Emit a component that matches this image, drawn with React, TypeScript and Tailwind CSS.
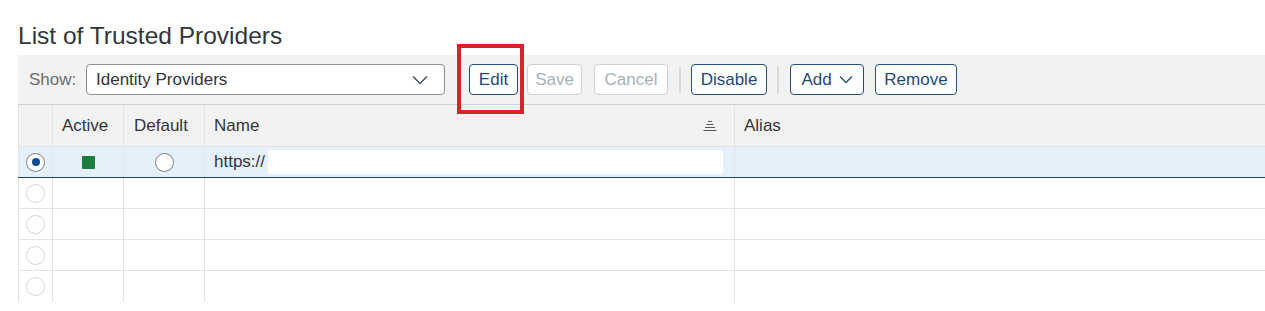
import React from "react";

const cols = ["w-[35px]", "w-[71px]", "w-[81px]", "w-[530px]", "flex-1"];

function Radio({ checked, faint }: { checked?: boolean; faint?: boolean }) {
  return (
    <span
      className={`flex h-[19px] w-[19px] items-center justify-center rounded-full border bg-white ${
        faint ? "border-[#d6d6d6]" : "border-[#7b8087]"
      }`}
    >
      {checked && <span className="h-[8px] w-[8px] rounded-full bg-[#0a4f9a]" />}
    </span>
  );
}

function Btn({ label, disabled, chevron, className = "" }: { label: string; disabled?: boolean; chevron?: boolean; className?: string }) {
  return (
    <button
      className={`flex h-[31px] shrink-0 items-center justify-center gap-[7px] rounded-[4px] border bg-white text-[17px] ${
        disabled ? "border-[#c9d1d9] text-[#a7b1bb]" : "border-[#224f7f] text-[#1f4a78]"
      } ${className}`}
    >
      {label}
      {chevron && (
        <svg width="14" height="9" viewBox="0 0 14 9" fill="none">
          <path d="M1 1.5 L7 7.5 L13 1.5" stroke="#1f4a78" strokeWidth="1.3" />
        </svg>
      )}
    </button>
  );
}

function Sep({ className = "" }: { className?: string }) {
  return <div className={`h-[28px] w-[2px] shrink-0 bg-[#d9d9d9] ${className}`} />;
}

export default function App() {
  return (
    <div className="relative h-[311px] w-[1265px] overflow-hidden bg-white font-['Liberation_Sans',Arial,sans-serif] text-[#32363a]">
      <div className="pl-[18px] pt-[21px] text-[24.5px] leading-[30px]">List of Trusted Providers</div>

      <div className="ml-[18px] mt-[4px] flex h-[50px] items-center border-b border-[#cfcfcf] bg-[#f2f2f2] pl-[11px]">
        <span className="w-[57px] shrink-0 text-[17px] text-[#6a6d70]">Show:</span>
        <div className="flex h-[31px] w-[359px] shrink-0 items-center justify-between rounded-[4px] border border-[#8a9097] bg-white pl-[9px] pr-[16px] text-[17px]">
          <span>Identity Providers</span>
          <svg width="16" height="10" viewBox="0 0 16 10" fill="none">
            <path d="M1 1.5 L8 8.5 L15 1.5" stroke="#3a4a5c" strokeWidth="1.3" />
          </svg>
        </div>
        <Btn label="Edit" className="ml-[24px] w-[49px]" />
        <Btn label="Save" disabled className="ml-[9px] w-[55px]" />
        <Btn label="Cancel" disabled className="ml-[12px] w-[74px]" />
        <Sep className="ml-[11px]" />
        <Btn label="Disable" className="ml-[10px] w-[76px]" />
        <Sep className="ml-[10px]" />
        <Btn label="Add" chevron className="ml-[11px] w-[74px]" />
        <Btn label="Remove" className="ml-[11px] w-[82px]" />
      </div>

      <div className="ml-[18px]">
        <div className="flex h-[42px] border-b border-[#e3e3e3] bg-[#f2f2f2] text-[17px]">
          <div className={`${cols[0]} border-l border-r border-[#e3e3e3]`} />
          <div className={`${cols[1]} flex items-center border-r border-[#e3e3e3] pl-[9px]`}>Active</div>
          <div className={`${cols[2]} flex items-center border-r border-[#e3e3e3] pl-[10px]`}>Default</div>
          <div className={`${cols[3]} flex items-center justify-between border-r border-[#e3e3e3] pl-[9px] pr-[17px]`}>
            <span>Name</span>
            <svg width="14" height="10" viewBox="0 0 14 10" fill="none" stroke="#55595e" strokeWidth="1">
              <path d="M5 0.5 H9" />
              <path d="M3.5 3.5 H10.5" />
              <path d="M2 6.5 H12" />
              <path d="M0.5 9.5 H13.5" />
            </svg>
          </div>
          <div className={`${cols[4]} flex items-center pl-[9px]`}>Alias</div>
        </div>

        <div className="flex h-[31px] border-b border-[#1e3f60] bg-[#e5f0fa] text-[17px]">
          <div className={`${cols[0]} flex items-center justify-center border-l border-r border-[#dfe6ee]`}>
            <Radio checked />
          </div>
          <div className={`${cols[1]} flex items-center justify-center border-r border-[#dfe6ee]`}>
            <span className="h-[13px] w-[13px] rounded-[1px] bg-[#1b7d3e]" />
          </div>
          <div className={`${cols[2]} flex items-center justify-center border-r border-[#dfe6ee]`}>
            <Radio />
          </div>
          <div className={`${cols[3]} flex items-center border-r border-[#dfe6ee] pl-[9px]`}>
            <span>https://</span>
            <span className="ml-[3px] h-[24px] w-[455px] rounded-[3px] bg-white" />
          </div>
          <div className={cols[4]} />
        </div>

        {[0, 1, 2, 3].map((i) => (
          <div key={i} className={`flex h-[31px] ${i < 3 ? "border-b border-[#e3e3e3]" : ""}`}>
            <div className={`${cols[0]} flex items-center justify-center border-l border-r border-[#e3e3e3]`}>
              <Radio faint />
            </div>
            <div className={`${cols[1]} border-r border-[#e3e3e3]`} />
            <div className={`${cols[2]} border-r border-[#e3e3e3]`} />
            <div className={`${cols[3]} border-r border-[#e3e3e3]`} />
            <div className={cols[4]} />
          </div>
        ))}
      </div>

      <div className="absolute left-[457px] top-[44px] h-[70px] w-[67px] border-[4px] border-[#d8232a]" />
    </div>
  );
}
